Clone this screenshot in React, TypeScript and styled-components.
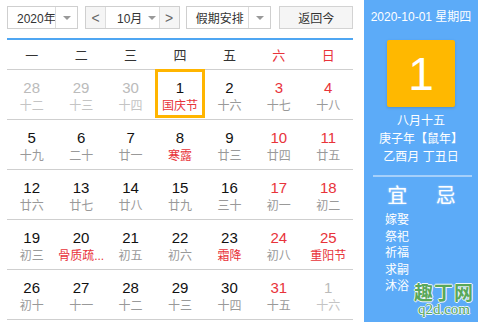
import styled, { createGlobalStyle } from "styled-components";

const GlobalStyle = createGlobalStyle`
  html, body {
    margin: 0;
    padding: 0;
    background: #fff;
  }
  body {
    font-family: "Liberation Sans", Arial, "Noto Sans CJK SC", sans-serif;
  }
`;

const Page = styled.div`
  display: flex;
  width: 478px;
  height: 322px;
  overflow: hidden;
  position: relative;
`;

const Left = styled.div`
  width: 346px;
  padding: 6px 11px 0 7px;
  background: #fff;
`;

const Toolbar = styled.div`
  display: flex;
  height: 23px;
  font-size: 12px;
  color: #333;
  white-space: nowrap;
`;

type SelectProps = { w: number; gap: number };
const Select = styled.div<SelectProps>`
  display: flex;
  box-sizing: border-box;
  width: ${(p) => p.w}px;
  margin-right: ${(p) => p.gap}px;
  height: 23px;
  border: 1px solid #cfcfcf;
  background: #fff;
`;

const SelectText = styled.div`
  flex: 1;
  display: flex;
  align-items: center;
  padding-left: 9px;
  overflow: hidden;
`;

const Arrow = styled.div`
  width: 21px;
  flex-shrink: 0;
  border-left: 1px solid #dcdcdc;
  display: flex;
  align-items: center;
  justify-content: center;
  &::after {
    content: "";
    border-left: 4px solid transparent;
    border-right: 4px solid transparent;
    border-top: 4px solid #999;
  }
`;

const MonthGroup = styled.div`
  display: flex;
  box-sizing: border-box;
  width: 95px;
  margin-right: 6px;
  height: 23px;
  border: 1px solid #cfcfcf;
`;

const Step = styled.div`
  width: 19px;
  flex-shrink: 0;
  display: flex;
  align-items: center;
  justify-content: center;
  background: #f5f5f5;
  color: #666;
  font-size: 14px;
`;

const MonthBox = styled.div`
  flex: 1;
  display: flex;
  align-items: center;
  border-left: 1px solid #dcdcdc;
  border-right: 1px solid #dcdcdc;
  padding-left: 11px;
  gap: 6px;
  &::after {
    content: "";
    border-left: 4px solid transparent;
    border-right: 4px solid transparent;
    border-top: 4px solid #999;
  }
`;

const TodayButton = styled.div`
  box-sizing: border-box;
  width: 74px;
  height: 23px;
  margin-left: 2px;
  border: 1px solid #d3d3d3;
  background: #f5f5f5;
  display: flex;
  align-items: center;
  justify-content: center;
`;

const BlueLine = styled.div`
  height: 2px;
  margin-top: 9px;
  background: #4fa6f2;
`;

const WeekHeader = styled.div`
  display: grid;
  grid-template-columns: repeat(7, 1fr);
  height: 29px;
  border-bottom: 1px solid #cfcfcf;
  align-items: center;
  font-size: 13px;
`;

const WeekDay = styled.div<{ weekend?: boolean }>`
  text-align: center;
  color: ${(p) => (p.weekend ? "#e8333a" : "#333")};
`;

const Row = styled.div`
  display: grid;
  grid-template-columns: repeat(7, 1fr);
  height: 49px;
  border-bottom: 1px solid #cfcfcf;
`;

type CellProps = { selected?: boolean };
const Cell = styled.div<CellProps>`
  display: flex;
  flex-direction: column;
  align-items: center;
  box-sizing: border-box;
  margin-top: ${(p) => (p.selected ? "-1px" : "0")};
  margin-bottom: ${(p) => (p.selected ? "1px" : "0")};
  box-shadow: ${(p) => (p.selected ? "inset 0 0 0 3px #ffb500" : "none")};
  padding-top: ${(p) => (p.selected ? "10px" : "9px")};
`;

type Tone = "normal" | "red" | "faded";
const Day = styled.div<{ tone: Tone }>`
  font-size: 15px;
  line-height: 18px;
  color: ${(p) =>
    p.tone === "red" ? "#e8333a" : p.tone === "faded" ? "#bbb" : "#111"};
`;

const Lunar = styled.div<{ tone: Tone }>`
  font-size: 12px;
  line-height: 16px;
  margin-top: 1px;
  white-space: nowrap;
  color: ${(p) =>
    p.tone === "red" ? "#e8333a" : p.tone === "faded" ? "#c4c4c4" : "#999"};
`;

const Right = styled.div`
  flex: 1;
  background: #5cabf8;
  color: #fff;
  display: flex;
  flex-direction: column;
  align-items: center;
  padding-top: 9px;
`;

const DateLine = styled.div`
  font-size: 12px;
  line-height: 16px;
`;

const BigDay = styled.div`
  margin-top: 15px;
  width: 68px;
  height: 67px;
  border-radius: 2px;
  background: #ffb800;
  box-shadow: 0 1px 3px rgba(0, 0, 0, 0.15);
  display: flex;
  align-items: center;
  justify-content: center;
  font-size: 46px;
  font-family: "Liberation Sans", Arial, sans-serif;
`;

const InfoLines = styled.div`
  margin-top: 5px;
  text-align: center;
  font-size: 12px;
  line-height: 18px;
`;

const Divider = styled.div`
  align-self: stretch;
  margin: 9px 6px 0 9px;
  height: 2px;
  background: #a5d0fb;
`;

const YiJi = styled.div`
  display: grid;
  grid-template-columns: 1fr 1fr;
  align-self: stretch;
  padding: 0 8px 0 9px;
  margin-top: 7px;
`;

const YiJiCol = styled.div`
  display: flex;
  flex-direction: column;
  align-items: center;
`;

const YiJiTitle = styled.div`
  font-size: 20px;
  line-height: 24px;
  text-shadow: 0 0 2px rgba(255, 255, 255, 0.6);
`;

const YiList = styled.div`
  margin-top: 4px;
  font-size: 12px;
  line-height: 16.5px;
  align-self: flex-start;
  padding-left: 12px;
`;

const Watermark = styled.div`
  position: absolute;
  right: 4px;
  bottom: 5px;
  display: flex;
  flex-direction: column;
  align-items: center;
  color: #5aa84a;
  font-family: "Noto Sans CJK SC", sans-serif;
  text-shadow: -1px 0 #fff, 1px 0 #fff, 0 1px #fff, 0 -1px #fff;
  line-height: 1;
  opacity: 0.9;
`;

const WmTitle = styled.div`
  font-size: 19px;
  font-weight: bold;
  letter-spacing: 1px;
`;

const WmUrl = styled.div`
  font-size: 15px;
  font-family: "Liberation Serif", serif;
  margin-top: 1px;
`;

type DayData = { d: string; l: string; dt?: Tone; lt?: Tone; sel?: boolean };

const f = (d: string, l: string): DayData => ({ d, l, dt: "faded", lt: "faded" });
const n = (d: string, l: string, lt?: Tone): DayData => ({ d, l, lt });
const r = (d: string, l: string, lt?: Tone): DayData => ({ d, l, dt: "red", lt });

const weeks: DayData[][] = [
  [
    f("28", "十二"),
    f("29", "十三"),
    f("30", "十四"),
    { d: "1", l: "国庆节", lt: "red", sel: true },
    n("2", "十六"),
    r("3", "十七"),
    r("4", "十八"),
  ],
  [
    n("5", "十九"),
    n("6", "二十"),
    n("7", "廿一"),
    n("8", "寒露", "red"),
    n("9", "廿三"),
    r("10", "廿四"),
    r("11", "廿五"),
  ],
  [
    n("12", "廿六"),
    n("13", "廿七"),
    n("14", "廿八"),
    n("15", "廿九"),
    n("16", "三十"),
    r("17", "初一"),
    r("18", "初二"),
  ],
  [
    n("19", "初三"),
    n("20", "骨质疏...", "red"),
    n("21", "初五"),
    n("22", "初六"),
    n("23", "霜降", "red"),
    r("24", "初八"),
    r("25", "重阳节", "red"),
  ],
  [
    n("26", "初十"),
    n("27", "十一"),
    n("28", "十二"),
    n("29", "十三"),
    n("30", "十四"),
    r("31", "十五"),
    f("1", "十六"),
  ],
];

const weekNames = ["一", "二", "三", "四", "五", "六", "日"];

export default function App() {
  return (
    <>
      <GlobalStyle />
      <Page>
        <Left>
          <Toolbar>
            <Select w={71} gap={7}>
              <SelectText>2020年</SelectText>
              <Arrow />
            </Select>
            <MonthGroup>
              <Step>&lt;</Step>
              <MonthBox>10月</MonthBox>
              <Step>&gt;</Step>
            </MonthGroup>
            <Select w={86} gap={6}>
              <SelectText>假期安排</SelectText>
              <Arrow />
            </Select>
            <TodayButton>返回今</TodayButton>
          </Toolbar>
          <BlueLine />
          <WeekHeader>
            {weekNames.map((w, i) => (
              <WeekDay key={w} weekend={i >= 5}>
                {w}
              </WeekDay>
            ))}
          </WeekHeader>
          {weeks.map((week, wi) => (
            <Row key={wi}>
              {week.map((c, ci) => (
                <Cell key={ci} selected={c.sel}>
                  <Day tone={c.dt ?? "normal"}>{c.d}</Day>
                  <Lunar tone={c.lt ?? "normal"}>{c.l}</Lunar>
                </Cell>
              ))}
            </Row>
          ))}
        </Left>
        <Right>
          <DateLine>2020-10-01 星期四</DateLine>
          <BigDay>1</BigDay>
          <InfoLines>
            <div>八月十五</div>
            <div>庚子年【鼠年】</div>
            <div>乙酉月 丁丑日</div>
          </InfoLines>
          <Divider />
          <YiJi>
            <YiJiCol>
              <YiJiTitle>宜</YiJiTitle>
              <YiList>
                <div>嫁娶</div>
                <div>祭祀</div>
                <div>祈福</div>
                <div>求嗣</div>
                <div>沐浴</div>
              </YiList>
            </YiJiCol>
            <YiJiCol>
              <YiJiTitle>忌</YiJiTitle>
            </YiJiCol>
          </YiJi>
        </Right>
        <Watermark>
          <WmTitle>趣丁网</WmTitle>
          <WmUrl>q2d.com</WmUrl>
        </Watermark>
      </Page>
    </>
  );
}
